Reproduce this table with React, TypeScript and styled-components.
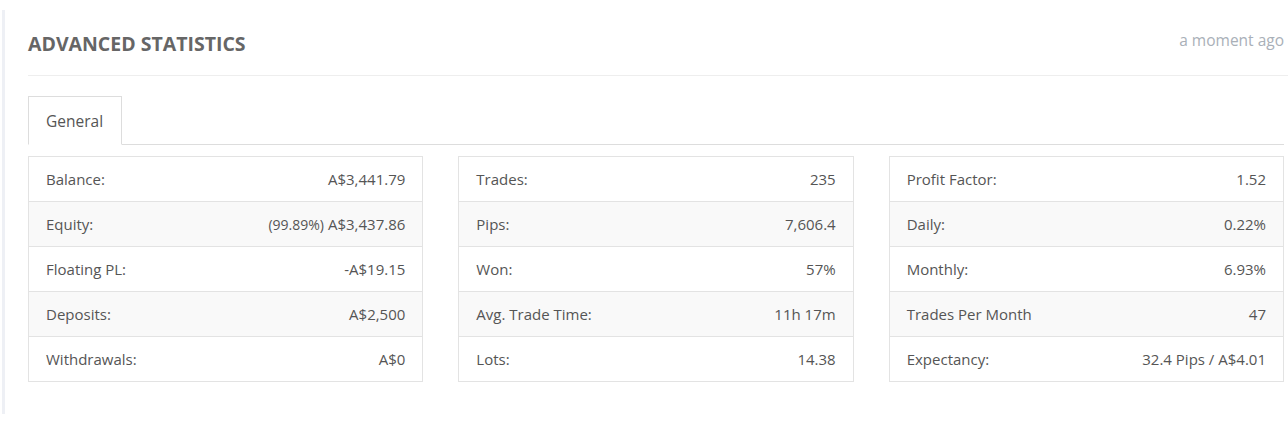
import React from 'react'
import styled, { createGlobalStyle } from 'styled-components'

const GlobalStyle = createGlobalStyle`
  body {
    margin: 0;
    background: #fff;
    font-family: "Open Sans", "Liberation Sans", sans-serif;
    color: #555;
  }
`

const Panel = styled.section`
  margin: 10px 0 0 2px;
  border-left: 3px solid #eef0f5;
  padding: 0 4px 32px 23px;
`

const Header = styled.header`
  display: flex;
  justify-content: space-between;
  align-items: flex-start;
  height: 66px;
  padding-top: 21px;
  box-sizing: border-box;
  border-bottom: 1px solid #eeeeee;
  margin-right: -4px;
`

const Title = styled.h2`
  margin: 0;
  font-size: 19.5px;
  line-height: 26px;
  font-weight: 700;
  color: #666;
`

const Updated = styled.span`
  margin: -2px 4px 0 0;
  font-size: 15.5px;
  line-height: 22px;
  color: #a9b0b8;
`

const TabBar = styled.div`
  display: flex;
  margin-top: 20px;
  border-bottom: 1px solid #dddddd;
`

const Tab = styled.div<{ $active?: boolean }>`
  height: 47px;
  padding: 0 18px 0 17px;
  display: flex;
  align-items: center;
  font-size: 15.5px;
  color: #555;
  background: #fff;
  border: 1px solid #dddddd;
  border-bottom: ${(p) => (p.$active ? '1px solid #fff' : '1px solid #ddd')};
  margin-bottom: -1px;
`

const Grid = styled.div`
  display: grid;
  grid-template-columns: repeat(3, 1fr);
  gap: 35px;
  margin-top: 11px;
`

const Table = styled.div`
  border: 1px solid #e3e3e3;
`

const Row = styled.div<{ $striped?: boolean }>`
  display: flex;
  justify-content: space-between;
  align-items: center;
  height: 44px;
  padding: 0 17px;
  font-size: 15px;
  color: #555;
  background: ${(p) => (p.$striped ? '#f9f9f9' : '#fff')};
  border-top: 1px solid #e3e3e3;

  &:first-child {
    border-top: none;
  }
`

const Note = styled.small`
  font-size: 14px;
  margin-right: 4px;
`

type Stat = { label: string; value: string; note?: string }

const columns: Stat[][] = [
  [
    { label: 'Balance:', value: 'A$3,441.79' },
    { label: 'Equity:', value: 'A$3,437.86', note: '(99.89%)' },
    { label: 'Floating PL:', value: '-A$19.15' },
    { label: 'Deposits:', value: 'A$2,500' },
    { label: 'Withdrawals:', value: 'A$0' },
  ],
  [
    { label: 'Trades:', value: '235' },
    { label: 'Pips:', value: '7,606.4' },
    { label: 'Won:', value: '57%' },
    { label: 'Avg. Trade Time:', value: '11h 17m' },
    { label: 'Lots:', value: '14.38' },
  ],
  [
    { label: 'Profit Factor:', value: '1.52' },
    { label: 'Daily:', value: '0.22%' },
    { label: 'Monthly:', value: '6.93%' },
    { label: 'Trades Per Month', value: '47' },
    { label: 'Expectancy:', value: '32.4 Pips / A$4.01' },
  ],
]

export default function App() {
  return (
    <>
      <GlobalStyle />
      <Panel>
        <Header>
          <Title>ADVANCED STATISTICS</Title>
          <Updated>a moment ago</Updated>
        </Header>
        <TabBar>
          <Tab $active>General</Tab>
        </TabBar>
        <Grid>
          {columns.map((col, i) => (
            <Table key={i}>
              {col.map((s, j) => (
                <Row key={s.label} $striped={j % 2 === 1}>
                  <span>{s.label}</span>
                  <span>
                    {s.note && <Note>{s.note}</Note>}
                    {s.value}
                  </span>
                </Row>
              ))}
            </Table>
          ))}
        </Grid>
      </Panel>
    </>
  )
}
